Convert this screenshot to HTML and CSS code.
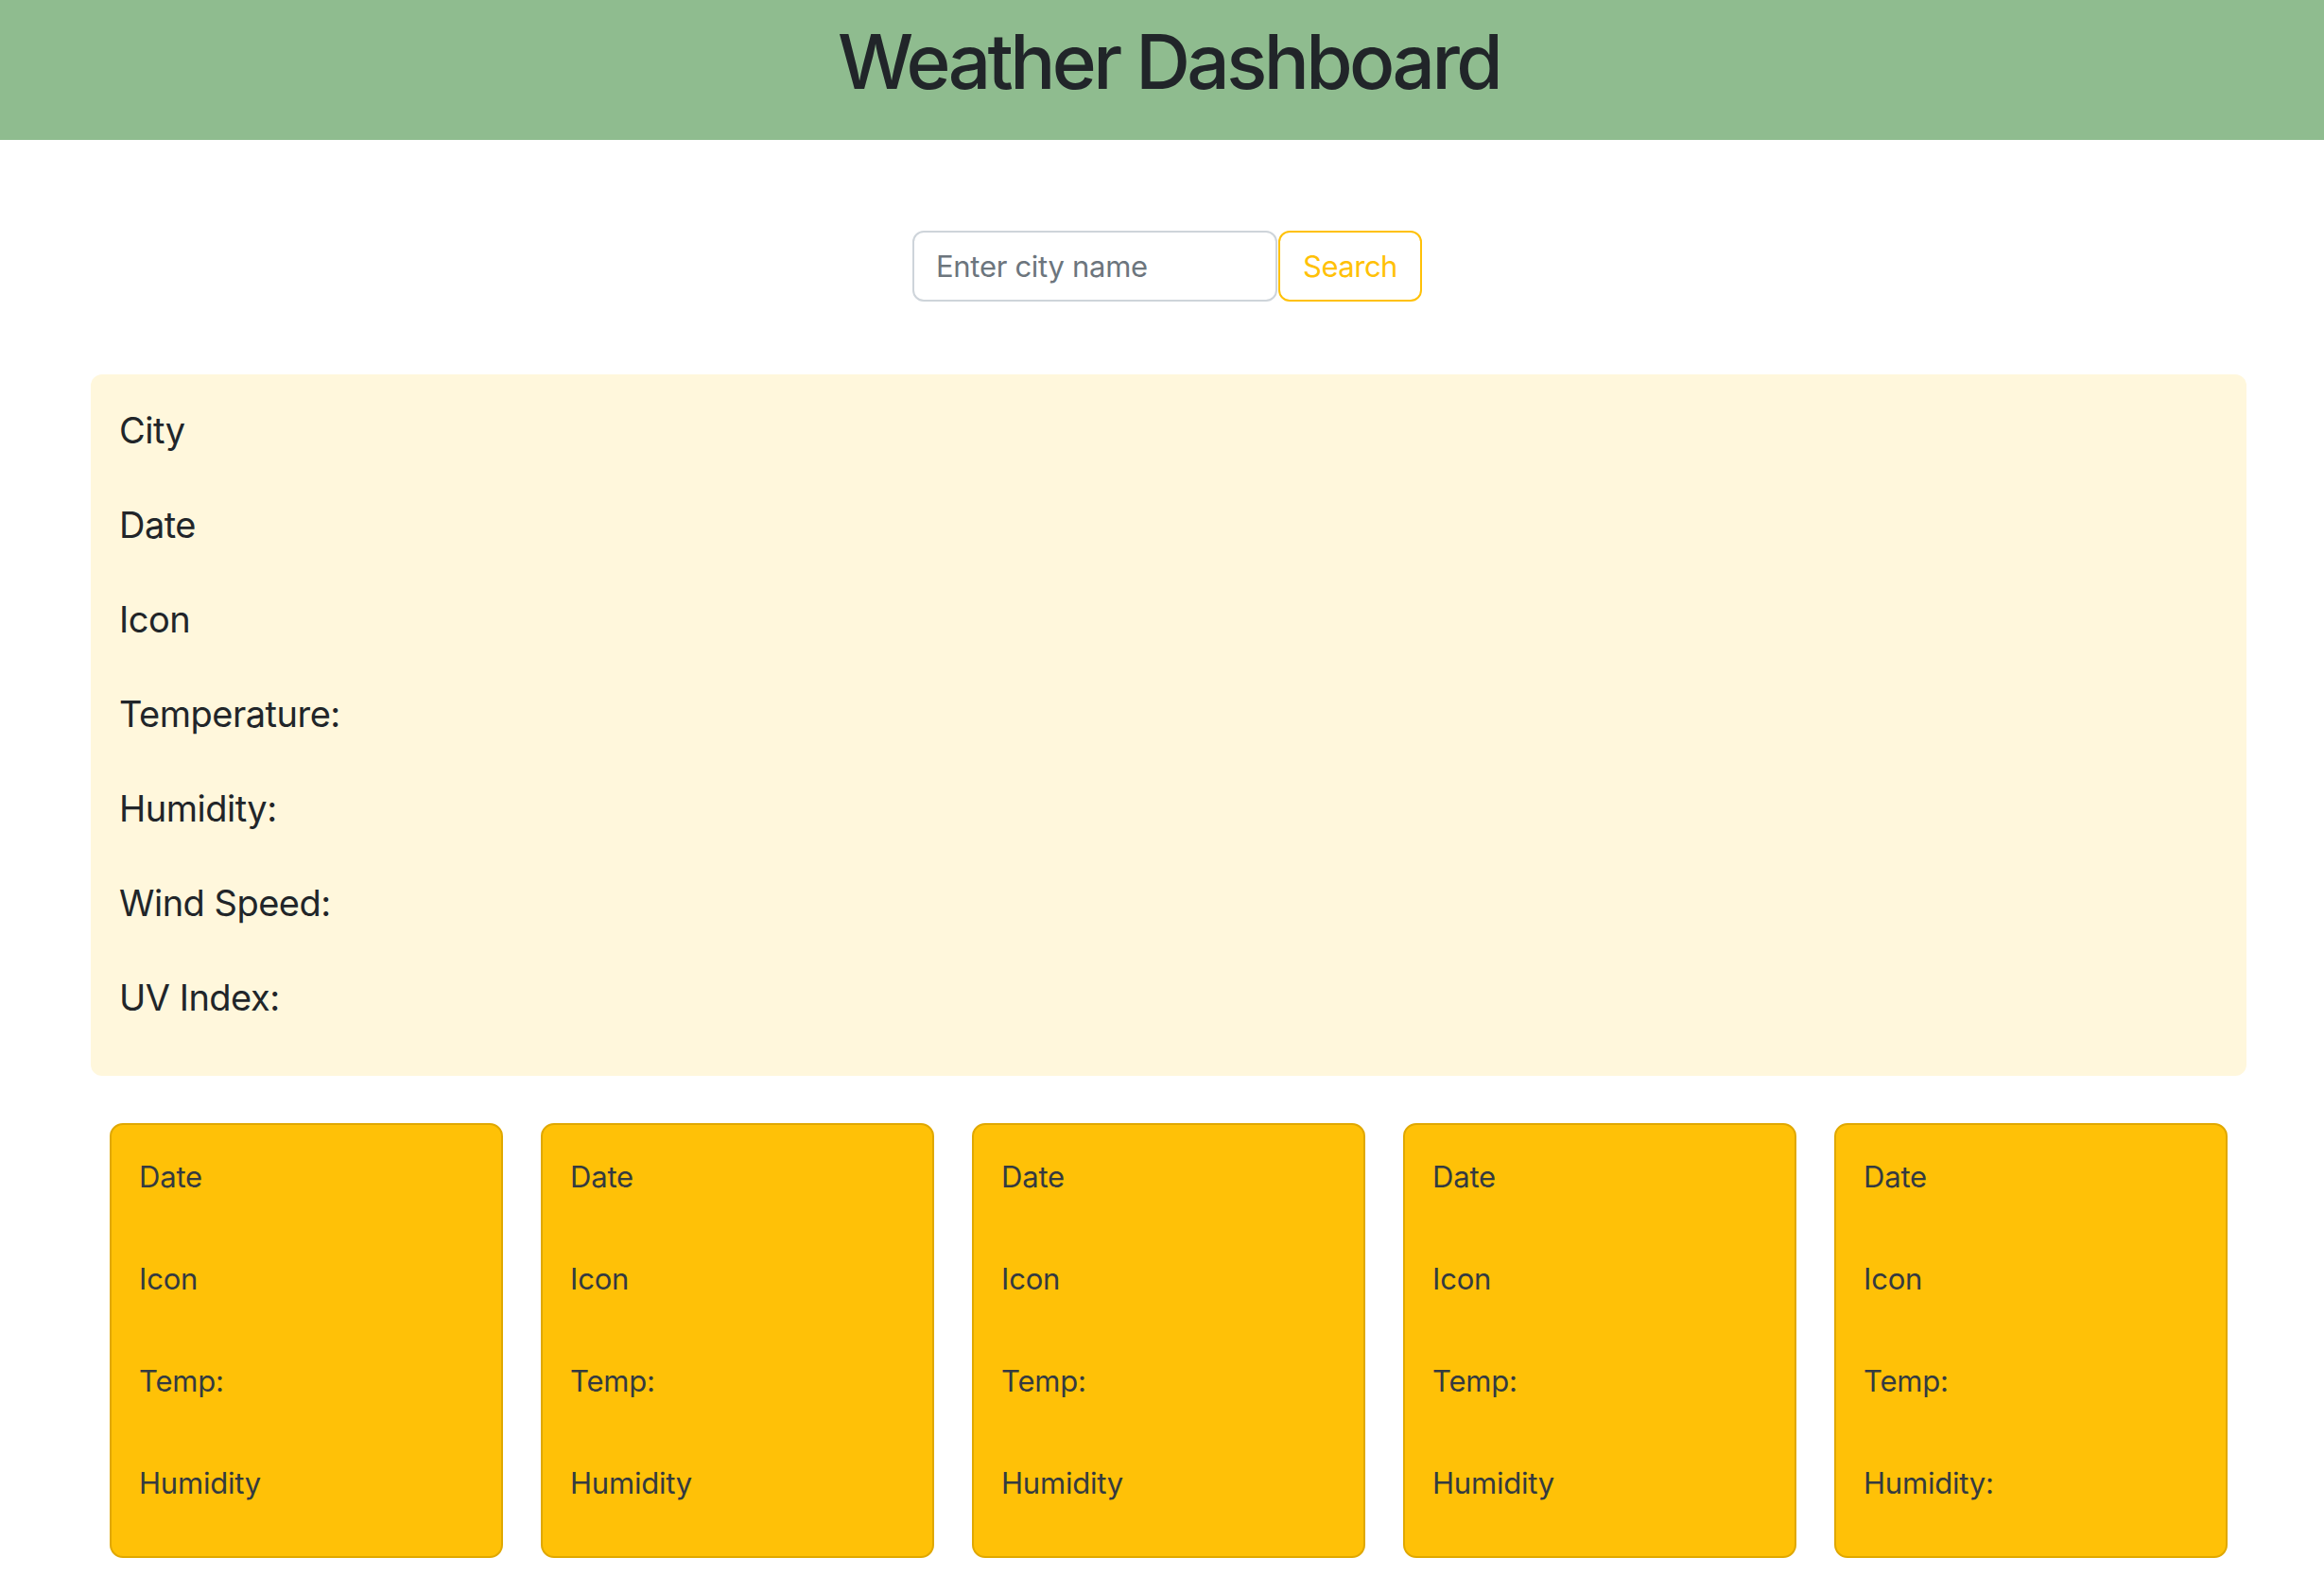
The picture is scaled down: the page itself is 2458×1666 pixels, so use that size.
FILE: index.html
```html
<!DOCTYPE html>
<html lang="en">
<head>
<meta charset="utf-8">
<title>Weather Dashboard</title>
<link rel="stylesheet" href="styles.css">
</head>
<body>
<header class="site-header">
  <h1 class="site-title">Weather Dashboard</h1>
</header>
<main class="page">
  <form class="search">
    <input class="search-input" type="text" placeholder="Enter city name">
    <button class="search-btn" type="button">Search</button>
  </form>
  <section class="current">
    <p class="current-row">City</p>
    <p class="current-row">Date</p>
    <p class="current-row">Icon</p>
    <p class="current-row">Temperature:</p>
    <p class="current-row">Humidity:</p>
    <p class="current-row">Wind Speed:</p>
    <p class="current-row">UV Index:</p>
  </section>
  <section class="forecast">
    <div class="col"><div class="card"><p class="card-row">Date</p><p class="card-row">Icon</p><p class="card-row">Temp:</p><p class="card-row">Humidity</p></div></div>
    <div class="col"><div class="card"><p class="card-row">Date</p><p class="card-row">Icon</p><p class="card-row">Temp:</p><p class="card-row">Humidity</p></div></div>
    <div class="col"><div class="card"><p class="card-row">Date</p><p class="card-row">Icon</p><p class="card-row">Temp:</p><p class="card-row">Humidity</p></div></div>
    <div class="col"><div class="card"><p class="card-row">Date</p><p class="card-row">Icon</p><p class="card-row">Temp:</p><p class="card-row">Humidity</p></div></div>
    <div class="col"><div class="card"><p class="card-row">Date</p><p class="card-row">Icon</p><p class="card-row">Temp:</p><p class="card-row">Humidity:</p></div></div>
  </section>
</main>
</body>
</html>
```
FILE: styles.css
```css
* { box-sizing: border-box; }
html, body { margin: 0; padding: 0; }
body {
  font-family: Inter, "Liberation Sans", sans-serif;
  color: #212529;
  background: #ffffff;
}
.site-header {
  background: #8fbc8f;
  height: 148px;
  padding: 17px 0 0 14px;
  text-align: center;
}
.site-title {
  margin: 0;
  font-size: 80px;
  font-weight: 500;
  line-height: 96px;
  letter-spacing: -3.6px;
  color: #212529;
}
.page {
  padding-left: 14px;
}
.search {
  display: flex;
  justify-content: center;
  gap: 1px;
  margin: 96px 0 0;
  padding-right: 3px;
}
.search-input {
  width: 386px;
  height: 75px;
  padding: 12px 23px;
  font-family: inherit;
  font-size: 31px;
  letter-spacing: -0.3px;
  color: #212529;
  border: 2px solid #ced4da;
  border-radius: 12px;
  outline: none;
}
.search-input::placeholder { color: #6c757d; }
.search-btn {
  width: 152px;
  height: 75px;
  padding: 12px 20px;
  font-family: inherit;
  font-size: 31px;
  letter-spacing: -0.5px;
  color: #ffc107;
  background: #ffffff;
  border: 2px solid #ffc107;
  border-radius: 12px;
}
.current {
  width: 2280px;
  margin: 77px auto 0;
  background: #fff7dc;
  border-radius: 12px;
  padding: 35px 30px 7px;
}
.current-row {
  margin: 0 0 52px;
  font-size: 38px;
  line-height: 48px;
  letter-spacing: -0.5px;
}
.forecast {
  width: 2280px;
  margin: 50px auto 0;
  display: grid;
  grid-template-columns: repeat(5, 1fr);
}
.col { padding: 0 20px; }
.card {
  height: 460px;
  background: #ffc107;
  border: 2px solid #e0a800;
  border-radius: 14px;
  padding: 31px 29px 0;
}
.card-row {
  margin: 0 0 60px;
  font-size: 31px;
  line-height: 48px;
  letter-spacing: -0.2px;
  color: #343a40;
}
```
